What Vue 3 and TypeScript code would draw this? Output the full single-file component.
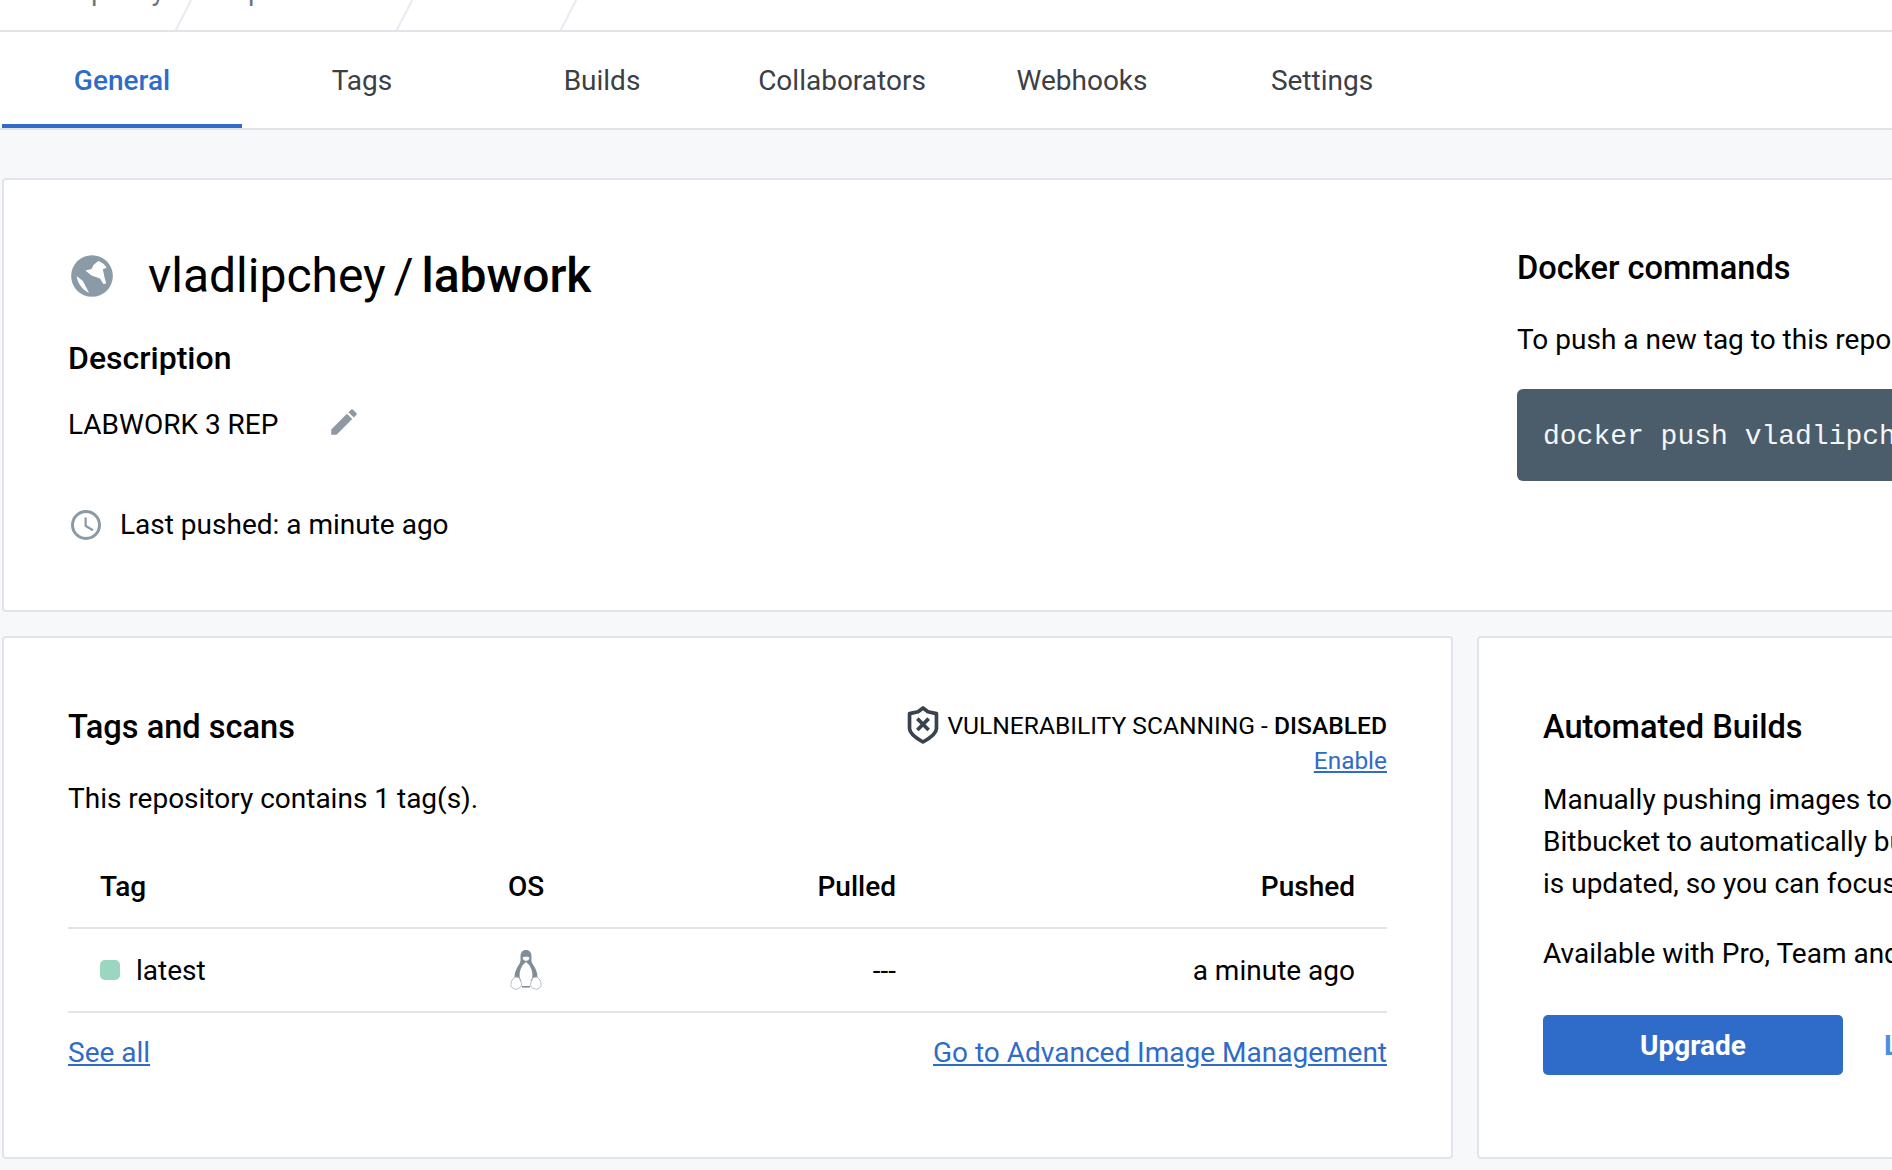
<script setup lang="ts">
const tabs: string[] = ['General', 'Tags', 'Builds', 'Collaborators', 'Webhooks', 'Settings'];
const crumbs: string[] = ['vladlipchey', 'Repositories', 'labwork'];
</script>

<template>
  <div class="page">
    <div class="crumbs">
      <span v-for="c in crumbs" :key="c" class="crumb"><span class="crumb-text">{{ c }}</span></span>
    </div>
    <nav class="tabs">
      <div v-for="(t, i) in tabs" :key="t" class="tab" :class="{ active: i === 0 }">{{ t }}</div>
    </nav>
    <main class="content">
      <section class="card summary">
        <div class="summary-left">
          <div class="title-row">
            <svg class="globe" viewBox="0 0 24 24" width="50" height="50">
              <circle cx="12" cy="12" r="10" fill="#8a9aa6" />
              <path fill="#fff" d="M15 4.800C16.800 5.400 18.300 6.600 19 8L17.200 8.800L18 12.600L18.800 15.600L17.500 15.800L15.800 13.200L11.800 11.800L8.800 9.400L11.800 8.600L12.600 6.800Z" />
              <path fill="#fff" d="M4.600 12L7.600 14.400L9.200 17.400L10.600 20C8 19.200 5.200 16 4.600 12Z" />
            </svg>
            <h1 class="title">vladlipchey / <b>labwork</b></h1>
          </div>
          <h2 class="desc-head">Description</h2>
          <div class="desc-row">
            <span>LABWORK 3 REP</span>
            <svg class="pencil" viewBox="0 0 24 24" width="34" height="34">
              <path fill="#8f98a5" d="M3 17.250V21h3.750L17.810 9.940l-3.750-3.750L3 17.250zM20.710 7.040a1 1 0 0 0 0-1.410l-2.340-2.340a1 1 0 0 0-1.410 0l-1.830 1.830 3.750 3.750 1.830-1.830z" />
            </svg>
          </div>
          <div class="pushed-row">
            <svg viewBox="0 0 24 24" width="36" height="36">
              <path fill="#8a9aa6" d="M12 2a10 10 0 1 0 0 20 10 10 0 0 0 0-20zm0 18a8 8 0 1 1 0-16 8 8 0 0 1 0 16zm.5-13H11v6l5.200 3.100.8-1.300-4.500-2.700V7z" />
            </svg>
            <span>Last pushed: a minute ago</span>
          </div>
        </div>
        <div class="summary-right">
          <h2 class="side-head">Docker commands</h2>
          <p class="side-text">To push a new tag to this repository,</p>
          <div class="code">docker push vladlipchey/labwork:tagname</div>
        </div>
      </section>

      <div class="lower">
        <section class="card tags-card">
          <div class="tags-top">
            <div>
              <h2 class="tags-head">Tags and scans</h2>
              <p class="tags-count">This repository contains 1 tag(s).</p>
            </div>
            <div class="scan">
              <div class="scan-line">
                <svg viewBox="0 0 24 28" width="34" height="40">
                  <path fill="none" stroke="#39434d" stroke-width="2.600" stroke-linejoin="round" d="M12 2l3.500 2.600L21.500 6v10.500c0 3.500-5 7-9.500 9.500-4.500-2.500-9.500-6-9.500-9.500V6l6-1.400z" />
                  <path fill="none" stroke="#39434d" stroke-width="2.600" d="M8 9.500l8 8M16 9.500l-8 8" />
                </svg>
                <span>VULNERABILITY SCANNING - <b>DISABLED</b></span>
              </div>
              <a class="link small">Enable</a>
            </div>
          </div>
          <div class="tag-table">
            <div class="row head">
              <span>Tag</span>
              <span>OS</span>
              <span class="right">Pulled</span>
              <span class="right">Pushed</span>
            </div>
            <div class="row">
              <span class="tag-name"><i class="dot"></i>latest</span>
              <span class="os">
                <svg viewBox="0 0 34 42" width="34" height="42">
                  <path fill="#7f8d99" d="M17 1c-3.500 0-5.500 2.500-5.500 6.500 0 3.500.5 5-1.500 8-2.500 3.500-4.500 8-4.500 13l3 3h17l3-3c0-5-2-9.500-4.500-13-2-3-1.500-4.500-1.500-8C22.500 3.500 20.500 1 17 1z" />
                  <path fill="#fff" d="M17 13c-1 1-2.800 2-3.800 4-2 3-3 7.500-2.500 11 .5 3 3 5 6.300 5s5.800-2 6.300-5c.5-3.500-.5-8-2.500-11-1-2-2.800-3-3.800-4z" />
                  <path fill="#fff" d="M13.500 8.500c1-1 6-1 7 0l-1 2.500-2.500 1-2.500-1z" />
                  <path fill="#fff" stroke="#a3adb5" stroke-width="0.800" d="M3 31l3-3 4 .5 2.500 6c.5 2-.5 3.500-2 4.500l-4 1.500-3.500-2C1 37.500 2 34 3 31zM31 31l-3-3-4 .5-2.500 6c-.5 2 .5 3.500 2 4.500l4 1.500 3.500-2C33 37.500 32 34 31 31z" />
                  <path fill="#7f8d99" d="M13 37h8v1.600h-8z" />
                </svg>
              </span>
              <span class="right">---</span>
              <span class="right">a minute ago</span>
            </div>
          </div>
          <div class="tags-links">
            <a class="link">See all</a>
            <a class="link">Go to Advanced Image Management</a>
          </div>
        </section>

        <section class="card builds-card">
          <h2 class="tags-head">Automated Builds</h2>
          <p class="builds-text">
            Manually pushing images to Hub? Connect your account to GitHub or<br />
            Bitbucket to automatically build and push a new image whenever your code<br />
            is updated, so you can focus your time on creating.
          </p>
          <p class="builds-avail">Available with Pro, Team and Business subscriptions.</p>
          <div class="builds-actions">
            <button class="upgrade">Upgrade</button>
            <a class="learn">Learn more</a>
          </div>
        </section>
      </div>
    </main>
  </div>
</template>

<style>
html,
body {
  margin: 0;
  overflow: hidden;
  background: #f7f8fa;
}
</style>

<style scoped>
.page {
  width: 1892px;
  height: 1170px;
  overflow: hidden;
  background: #f7f8fa;
  font-family: Roboto, 'Liberation Sans', sans-serif;
  color: #000;
}
.crumbs {
  display: flex;
  height: 30px;
  overflow: hidden;
  background: #fff;
  border-bottom: 2px solid #e1e4e8;
  padding-left: 2px;
}
.crumb {
  position: relative;
  font-size: 28px;
  color: #6c7680;
  width: 190px;
  flex: none;
}
.crumb-text {
  position: absolute;
  left: 24px;
  top: -26px;
  white-space: nowrap;
}
.crumb::after {
  content: '';
  position: absolute;
  right: 8px;
  top: -2px;
  height: 36px;
  width: 2px;
  background: #e8eaed;
  transform: rotate(27deg);
}
.crumb:nth-child(2) {
  width: 220.5px;
}
.crumb:nth-child(3) {
  width: 164.5px;
}
.tabs {
  display: flex;
  height: 96px;
  background: #fff;
  border-bottom: 2px solid #e1e4e8;
  padding-left: 2px;
}
.tab {
  width: 240px;
  box-sizing: border-box;
  display: flex;
  align-items: center;
  justify-content: center;
  padding-top: 1px;
  font-size: 28px;
  color: #3b4046;
}
.tab.active {
  color: #2f6bc9;
  font-weight: 500;
  border-bottom: 4px solid #2f6bc9;
  padding-top: 5px;
}
.content {
  padding: 48px 0 0 2px;
  width: 2400px;
}
.card {
  background: #fff;
  border: 2px solid #e1e4e8;
  border-radius: 4px;
  box-sizing: border-box;
}
.summary {
  display: flex;
  height: 434px;
  padding: 64px;
}
.summary-left {
  width: 1449px;
  flex: none;
}
.title-row {
  display: flex;
  align-items: center;
  gap: 31px;
  height: 56px;
  margin-top: 4px;
  margin-left: -1px;
}
.title {
  margin: 0;
  font-size: 48px;
  font-weight: 400;
  line-height: 56px;
  word-spacing: -4px;
}
.title b {
  font-weight: 500;
}
.desc-head {
  margin: 34px 0 0;
  font-size: 32px;
  font-weight: 500;
  line-height: 40px;
}
.desc-row {
  display: flex;
  align-items: center;
  gap: 49px;
  margin-top: 27px;
  font-size: 28px;
  line-height: 40px;
}
.pencil {
  margin: -6px 0 1px;
}
.pushed-row {
  display: flex;
  align-items: center;
  gap: 16px;
  margin-top: 60px;
  font-size: 28px;
  line-height: 40px;
}
.side-head {
  margin: 4px 0 0;
  font-size: 32.6px;
  font-weight: 500;
  line-height: 40px;
}
.side-text {
  margin: 32px 0 0;
  font-size: 28px;
  line-height: 40px;
  white-space: nowrap;
}
.code {
  margin-top: 29px;
  height: 92px;
  box-sizing: border-box;
  padding: 3px 26px 0;
  display: flex;
  align-items: center;
  width: 860px;
  border-radius: 6px;
  background: #4b5c6b;
  color: #f4f6f8;
  font-family: 'Liberation Mono', monospace;
  font-size: 28px;
}
.lower {
  display: flex;
  gap: 24px;
  margin-top: 24px;
  height: 523px;
}
.tags-card {
  width: 1451px;
  flex: none;
  padding: 69px 64px 0;
}
.builds-card {
  width: 900px;
  flex: none;
  padding: 69px 64px 0;
}
.tags-top {
  display: flex;
  justify-content: space-between;
}
.tags-head {
  margin: 0;
  font-size: 32.6px;
  font-weight: 500;
  line-height: 40px;
}
.tags-count {
  margin: 32px 0 0;
  font-size: 28px;
  line-height: 40px;
}
.scan {
  display: flex;
  flex-direction: column;
  align-items: flex-end;
  margin-top: -2px;
  font-size: 24.6px;
}
.scan-line {
  display: flex;
  align-items: center;
  gap: 7px;
  height: 40px;
}
.scan-line b {
  font-weight: 500;
}
.link {
  color: #2f6bc9;
  text-decoration: underline;
  font-size: 28px;
}
.link.small {
  font-size: 24.4px;
  margin-top: 1px;
}
.tag-table {
  margin-top: 26px;
  font-size: 28px;
}
.row {
  display: grid;
  grid-template-columns: 408px 224px 228px 459px;
  align-items: center;
  height: 84px;
  border-bottom: 2px solid #e1e4e8;
  box-sizing: border-box;
}
.row > span {
  padding: 0 32px;
}
.row.head {
  font-weight: 500;
}
.right {
  text-align: right;
}
.tag-name {
  display: flex;
  align-items: center;
  gap: 16px;
}
.dot {
  width: 20px;
  height: 20px;
  border-radius: 5px;
  background: #9bd6c0;
}
.os {
  display: flex;
  line-height: 0;
  margin-left: 1px;
}
.tags-links {
  display: flex;
  justify-content: space-between;
  margin-top: 20px;
  line-height: 40px;
}
.builds-text {
  margin: 32px 0 0;
  font-size: 28px;
  line-height: 42px;
  white-space: nowrap;
}
.builds-avail {
  margin: 28px 0 0;
  font-size: 28px;
  line-height: 42px;
  white-space: nowrap;
}
.builds-actions {
  display: flex;
  align-items: center;
  gap: 41px;
  margin-top: 40px;
}
.upgrade {
  width: 300px;
  height: 60px;
  border: none;
  border-radius: 5px;
  background: #2f6bc9;
  color: #fff;
  font-family: inherit;
  font-size: 28px;
  font-weight: 700;
}
.learn {
  color: #4a90e2;
  font-size: 28px;
  font-weight: 700;
  white-space: nowrap;
}
</style>
